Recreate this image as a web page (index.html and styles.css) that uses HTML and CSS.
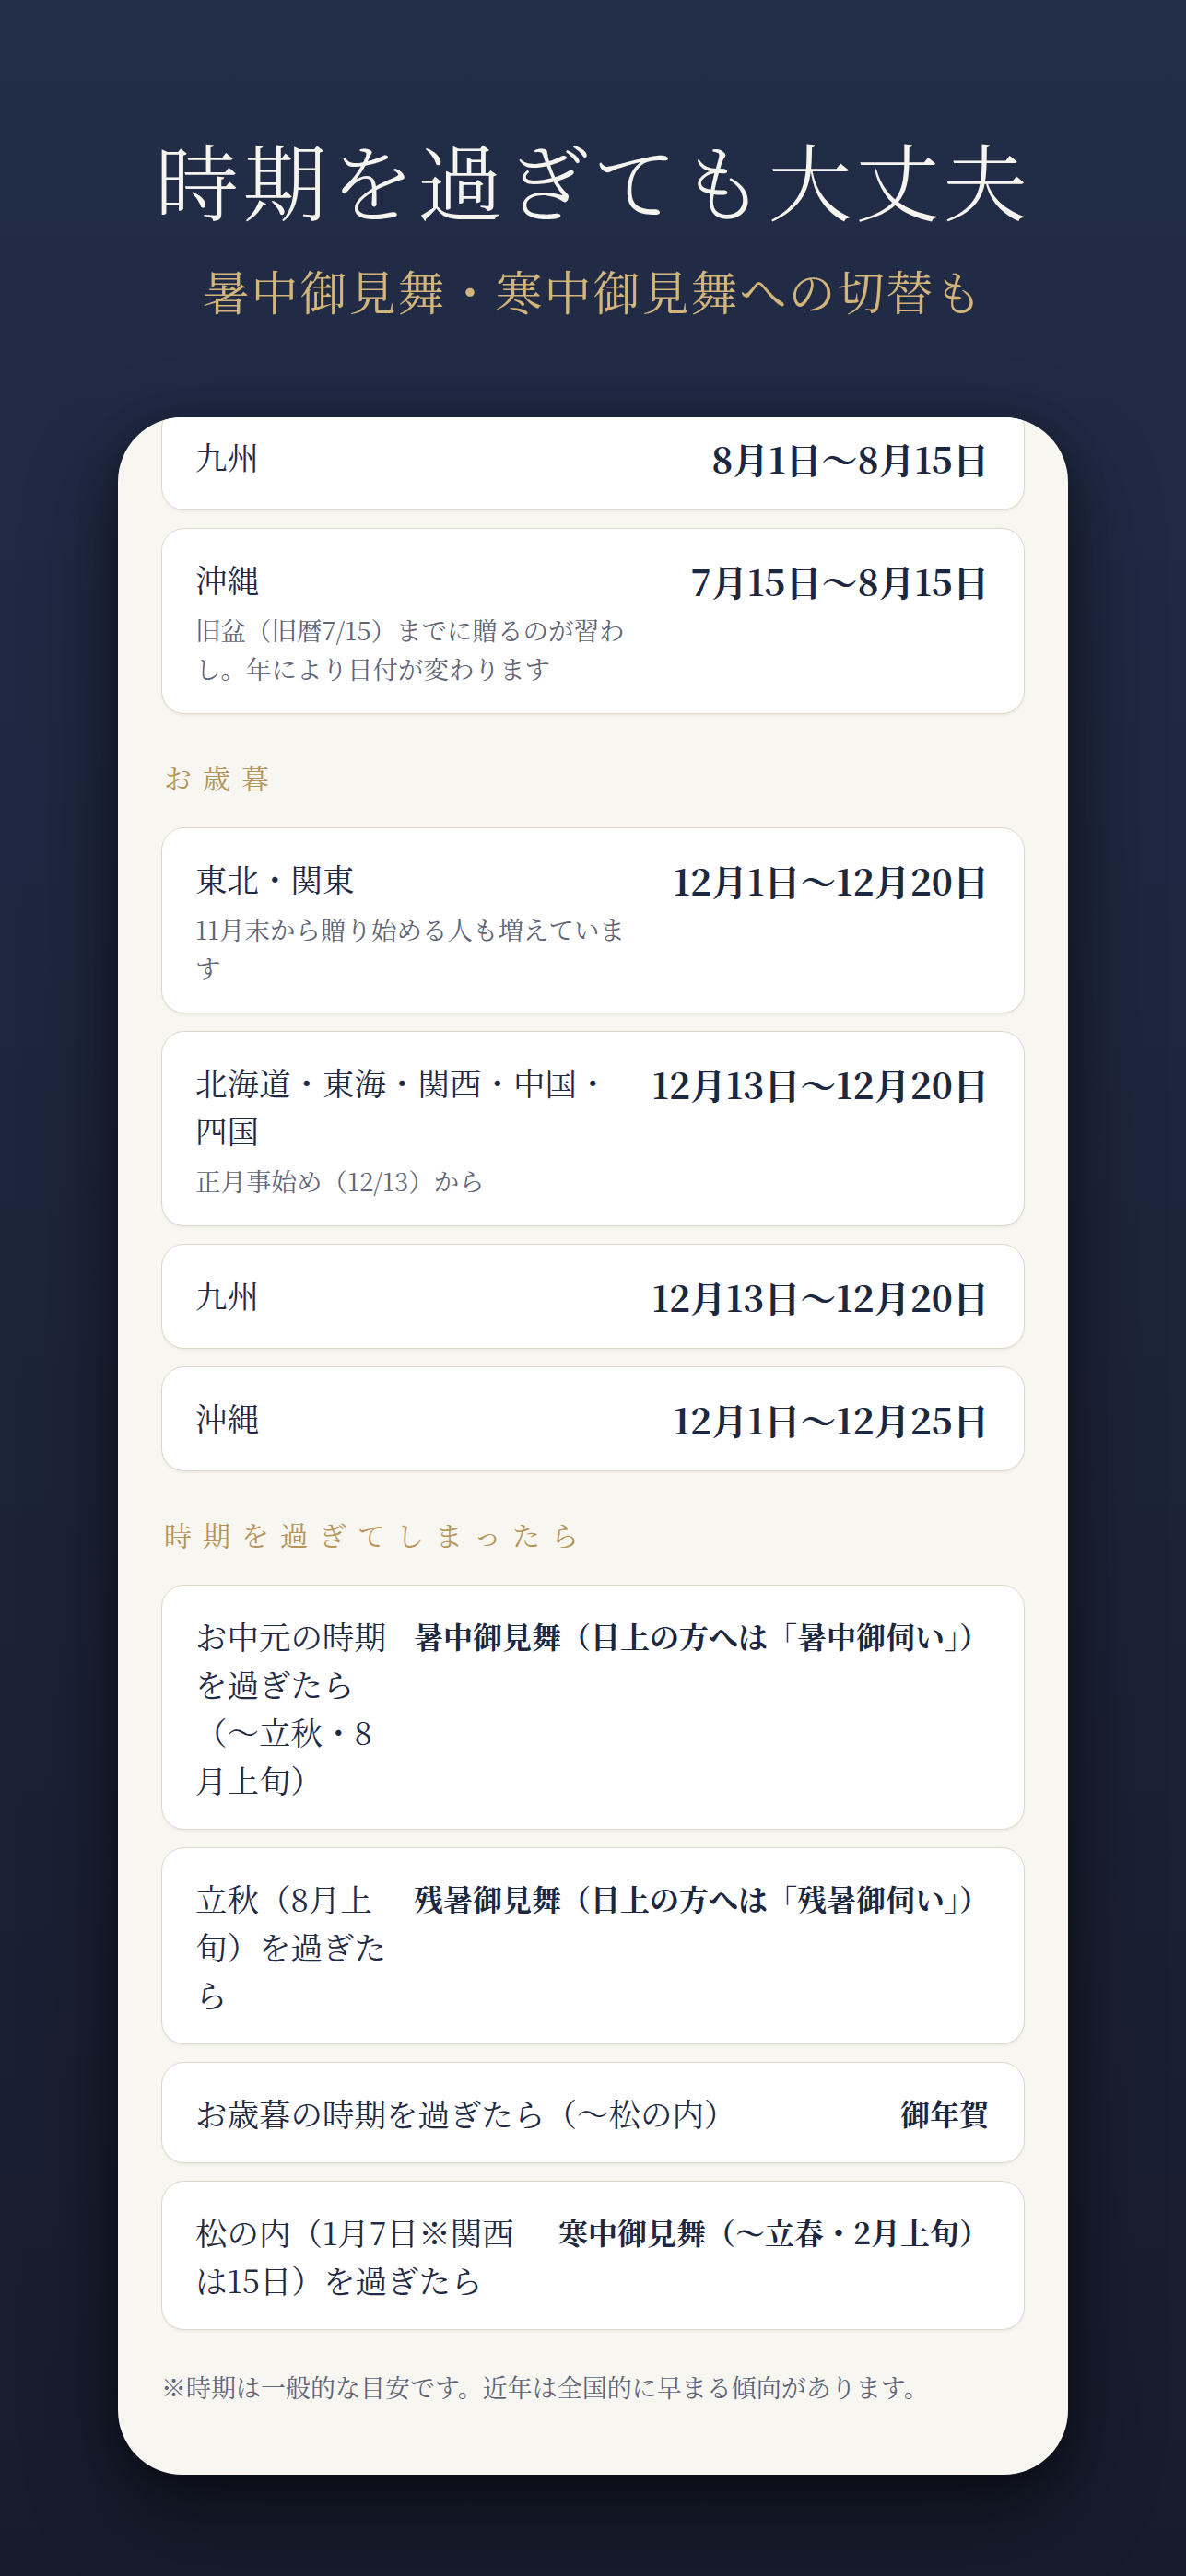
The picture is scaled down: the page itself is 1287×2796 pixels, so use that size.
FILE: index.html
```html
<!DOCTYPE html>
<html lang="ja">
<head>
  <meta charset="UTF-8"/>
  <meta name="viewport" content="width=device-width, initial-scale=1.0"/>
  <title>時期を過ぎても大丈夫</title>
  <link rel="stylesheet" href="styles.css">
</head>
<body>
  <header class="hero">
    <h1 class="hero-title">時期を過ぎても大丈夫</h1>
    <p class="hero-sub">暑中御見舞・寒中御見舞への切替も</p>
  </header>

  <main class="panel">
    <div class="panel-inner">
      <!-- お中元（続き） -->
      <ul class="rows">
        <li class="row">
          <div class="row-main"><div class="row-name">九州</div></div>
          <div class="row-date">8月1日〜8月15日</div>
        </li>
        <li class="row">
          <div class="row-main">
            <div class="row-name">沖縄</div>
            <div class="row-note">旧盆（旧暦7/15）までに贈るのが習わし。年により日付が変わります</div>
          </div>
          <div class="row-date">7月15日〜8月15日</div>
        </li>
      </ul>

      <h2 class="section-label">お歳暮</h2>
      <ul class="rows">
        <li class="row">
          <div class="row-main">
            <div class="row-name">東北・関東</div>
            <div class="row-note">11月末から贈り始める人も増えています</div>
          </div>
          <div class="row-date">12月1日〜12月20日</div>
        </li>
        <li class="row">
          <div class="row-main">
            <div class="row-name">北海道・東海・関西・中国・四国</div>
            <div class="row-note">正月事始め（12/13）から</div>
          </div>
          <div class="row-date">12月13日〜12月20日</div>
        </li>
        <li class="row">
          <div class="row-main"><div class="row-name">九州</div></div>
          <div class="row-date">12月13日〜12月20日</div>
        </li>
        <li class="row">
          <div class="row-main"><div class="row-name">沖縄</div></div>
          <div class="row-date">12月1日〜12月25日</div>
        </li>
      </ul>

      <h2 class="section-label">時期を過ぎてしまったら</h2>
      <ul class="rows">
        <li class="row row--switch">
          <div class="row-main"><div class="row-name">お中元の時期を過ぎたら（〜立秋・8月上旬）</div></div>
          <div class="row-alt">暑中御見舞（目上の方へは「暑中御伺い」）</div>
        </li>
        <li class="row row--switch">
          <div class="row-main"><div class="row-name">立秋（8月上旬）を過ぎたら</div></div>
          <div class="row-alt">残暑御見舞（目上の方へは「残暑御伺い」）</div>
        </li>
        <li class="row row--switch">
          <div class="row-main"><div class="row-name">お歳暮の時期を過ぎたら（〜松の内）</div></div>
          <div class="row-alt">御年賀</div>
        </li>
        <li class="row row--switch">
          <div class="row-main"><div class="row-name">松の内（1月7日※関西は15日）を過ぎたら</div></div>
          <div class="row-alt">寒中御見舞（〜立春・2月上旬）</div>
        </li>
      </ul>

      <p class="footnote">※時期は一般的な目安です。近年は全国的に早まる傾向があります。</p>
    </div>
  </main>
</body>
</html>
```

FILE: styles.css
```css
/* base */
* { box-sizing: border-box; margin: 0; padding: 0; }

body {
  min-height: 2796px;
  background: linear-gradient(180deg, #222d48 0%, #1d253b 50%, #171c2d 100%);
  font-family: "Noto Serif CJK JP", "Noto Sans CJK JP", serif;
  color: #1f2a44;
}

/* hero */
.hero {
  padding-top: 135px;
  text-align: center;
}
.hero-title {
  font-size: 91px;
  font-weight: 300;
  line-height: 117px;
  letter-spacing: 4px;
  color: #f6f4ef;
}
.hero-sub {
  margin-top: 25px;
  font-size: 51px;
  font-weight: 400;
  line-height: 76px;
  letter-spacing: 2px;
  color: #d3b47a;
}

/* panel */
.panel {
  width: 1031px;
  margin: 100px auto 0;
  background: #f8f6f1;
  border-radius: 70px;
  overflow: hidden;
  box-shadow: 0 40px 100px rgba(0, 0, 0, .45), 0 10px 40px rgba(0, 0, 0, .3);
}
.panel-inner {
  margin-top: -13px;
  padding: 0 47px 74px;
}

.rows {
  list-style: none;
  display: flex;
  flex-direction: column;
  gap: 19px;
}
.rows--after { gap: 17px; }

.row {
  display: flex;
  justify-content: space-between;
  align-items: flex-start;
  gap: 20px;
  padding: 28px 38px 28px 36px;
  background: #fff;
  border: 1px solid #ddd8cb;
  border-radius: 25px;
  box-shadow: 0 2px 2px rgba(120, 110, 90, .08);
}
.row--switch { gap: 24px; }

.row-main {
  flex: 1 1 0;
  min-width: 0;
  max-width: 475px;
}
.row--switch .row-main { max-width: none; }

.row-name {
  font-size: 34.5px;
  line-height: 52px;
  color: #1f2a44;
}
.row-note {
  margin-top: 8px;
  font-size: 27.5px;
  line-height: 42px;
  color: #5f6577;
}
.row-date {
  flex: none;
  white-space: nowrap;
  font-size: 39px;
  font-weight: 700;
  line-height: 56px;
  color: #1c2740;
}
.row-alt {
  flex: none;
  white-space: nowrap;
  font-size: 32px;
  font-weight: 700;
  line-height: 52px;
  color: #1c2740;
}

/* section labels */
.section-label {
  margin: 48px 0 35px 3px;
  font-size: 30px;
  font-weight: 400;
  line-height: 40px;
  letter-spacing: .4em;
  color: #b5955a;
}

.footnote {
  margin-top: 41px;
  font-size: 27px;
  line-height: 42px;
  color: #5f6577;
}
```
